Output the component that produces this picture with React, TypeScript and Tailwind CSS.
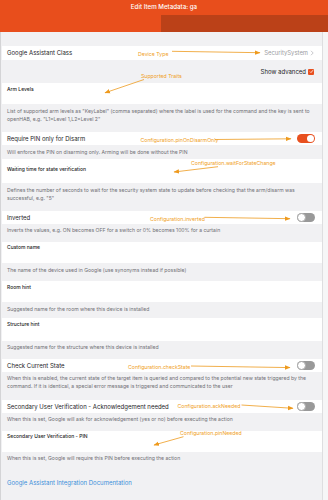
import React from "react";

function Toggle({ on }: { on: boolean }) {
  return on ? (
    <div className="w-[18px] h-[9px] rounded-full bg-[#e8501f] flex items-center justify-end pr-[1px]">
      <div className="w-[7px] h-[7px] rounded-full bg-white" />
    </div>
  ) : (
    <div className="w-[18px] h-[9px] rounded-full bg-[#999999] flex items-center justify-start">
      <div className="w-[9px] h-[9px] rounded-full bg-white border border-[#a8a8a8]" />
    </div>
  );
}

function ToggleRow({ label, on }: { label: string; on: boolean }) {
  return (
    <div className="h-[13px] bg-white flex items-center justify-between pl-[5px] pr-[7px]">
      <span className="text-[6px] leading-none text-[#1d1d1f]">{label}</span>
      <Toggle on={on} />
    </div>
  );
}

function Desc({ className, children }: { className: string; children: React.ReactNode }) {
  return (
    <div className={"pl-[5px] text-[5.1px] leading-[7.7px] text-[#707075] whitespace-nowrap " + className}>
      {children}
    </div>
  );
}

function Field({ className, label }: { className: string; label: string }) {
  return (
    <div className={"bg-white pl-[5px] " + className}>
      <div className="text-[5px] leading-[6px] font-medium text-[#222]">{label}</div>
    </div>
  );
}

function Note({ className, children }: { className: string; children: React.ReactNode }) {
  return (
    <span className={"absolute text-[5.2px] leading-none text-[#f0a025] whitespace-nowrap " + className}>
      {children}
    </span>
  );
}

export default function App() {
  return (
    <div className="relative w-[328px] h-[500px] overflow-hidden bg-[#f1f1f3] font-['Inter',sans-serif]">
      {/* header */}
      <div className="h-[32px] bg-[#e84e1c] flex flex-col">
        <div className="h-[15px] flex items-center justify-center text-white text-[6.2px] font-medium leading-none">
          Edit Item Metadata: ga
        </div>
        <div className="flex-1 flex">
          <div className="flex-1" />
          <div className="w-[167px] bg-[#bb4118]" />
        </div>
      </div>

      <div className="flex h-[468px]">
        <div className="w-px bg-[#d4d4d6]" />
        <div className="w-[321px] pl-px flex flex-col">
          <div className="h-[14px]" />
          <div className="h-[14px] bg-white flex items-center justify-between pl-[5px] pr-[8px]">
            <span className="text-[6px] leading-none text-[#1d1d1f]">Google Assistant Class</span>
            <span className="text-[5.9px] leading-none text-[#9c9ca1] flex items-center gap-[2px]">
              SecuritySystem
              <svg width="4" height="6" viewBox="0 0 4 6">
                <path d="M1 0.8 L3.2 3 L1 5.2" fill="none" stroke="#b0b0b5" strokeWidth="0.7" />
              </svg>
            </span>
          </div>
          <div className="h-[23px] flex items-center justify-end pr-[8px] gap-[2px]">
            <span className="text-[6px] leading-none text-[#1d1d1f]">Show advanced</span>
            <div className="w-[6px] h-[6px] bg-[#e8501f] rounded-[1px] flex items-center justify-center">
              <svg width="5" height="5" viewBox="0 0 5 5">
                <path d="M1 2.6 L2 3.6 L4 1.2" fill="none" stroke="white" strokeWidth="0.8" />
              </svg>
            </div>
          </div>
          <Field className="h-[21px] pt-[3px]" label="Arm Levels" />
          <Desc className="h-[28px] pt-[4px]">
            List of supported arm levels as "KeyLabel" (comma separated) where the label is used for the command and the key is sent to
            <br />
            openHAB, e.g. "L1=Level 1,L2=Level 2"
          </Desc>
          <ToggleRow label="Require PIN only for Disarm" on={true} />
          <Desc className="h-[14px] pt-[3.5px]">
            Will enforce the PIN on disarming only. Arming will be done without the PIN
          </Desc>
          <Field className="h-[24px] pt-[7px]" label="Waiting time for state verification" />
          <Desc className="h-[28px] pt-[4px]">
            Defines the number of seconds to wait for the security system state to update before checking that the arm/disarm was
            <br />
            successful, e.g. "5"
          </Desc>
          <ToggleRow label="Inverted" on={false} />
          <Desc className="h-[18px] pt-[3px]">
            Inverts the values, e.g. ON becomes OFF for a switch or 0% becomes 100% for a curtain
          </Desc>
          <Field className="h-[21px] pt-[2px]" label="Custom name" />
          <Desc className="h-[18px] pt-[3.5px]">
            The name of the device used in Google (use synonyms instead if possible)
          </Desc>
          <Field className="h-[21px] pt-[2.5px]" label="Room hint" />
          <Desc className="h-[16px] pt-[3.5px]">
            Suggested name for the room where this device is installed
          </Desc>
          <Field className="h-[23px] pt-[3px]" label="Structure hint" />
          <Desc className="h-[18px] pt-[3px]">
            Suggested name for the structure where this device is installed
          </Desc>
          <ToggleRow label="Check Current State" on={false} />
          <Desc className="h-[28px] pt-[3px]">
            When this is enabled, the current state of the target item is queried and compared to the potential new state triggered by the
            <br />
            command. If it is identical, a special error message is triggered and communicated to the user
          </Desc>
          <ToggleRow label="Secondary User Verification - Acknowledgement needed" on={false} />
          <Desc className="h-[18px] pt-[3px]">
            When this is set, Google will ask for acknowledgement (yes or no) before executing the action
          </Desc>
          <Field className="h-[21px] pt-[2px]" label="Secondary User Verification - PIN" />
          <Desc className="h-[28px] pt-[2.5px]">
            When this is set, Google will require this PIN before executing the action
          </Desc>
          <div className="pl-[5px] text-[6px] leading-none text-[#3a8fda]">
            Google Assistant Integration Documentation
          </div>
        </div>
        <div className="flex-1 border-l border-[#dedee0] bg-[#f6f6f7]" />
      </div>

      {/* annotations */}
      <svg className="absolute inset-0 pointer-events-none" width="328" height="500" viewBox="0 0 328 500">
        <defs>
          <marker id="ah" markerWidth="6" markerHeight="6" refX="5" refY="3" orient="auto" markerUnits="userSpaceOnUse">
            <path d="M0 0.8 L5.5 3 L0 5.2 Z" fill="#ee9a1e" />
          </marker>
        </defs>
        <g stroke="#ee9a1e" strokeWidth="0.8" fill="none" markerEnd="url(#ah)">
          <line x1="172" y1="51.3" x2="260" y2="52.7" />
          <line x1="144" y1="79.5" x2="105" y2="92.8" />
          <line x1="215" y1="139.5" x2="291" y2="138.8" />
          <line x1="218" y1="166.7" x2="174" y2="172" />
          <line x1="204.5" y1="217.3" x2="290" y2="218.7" />
          <line x1="191" y1="366" x2="290" y2="367.6" />
          <line x1="241.5" y1="405" x2="293" y2="408.3" />
          <line x1="183.5" y1="436.7" x2="154" y2="445" />
        </g>
      </svg>
      <Note className="left-[138px] top-[52px]">Device Type</Note>
      <Note className="left-[141px] top-[73.5px]">Supported Traits</Note>
      <Note className="left-[140.5px] top-[138px]">Configuration.pinOnDisarmOnly</Note>
      <Note className="left-[191px] top-[160.5px]">Configuration.waitForStateChange</Note>
      <Note className="left-[150px] top-[216.5px]">Configuration.inverted</Note>
      <Note className="left-[128px] top-[365px]">Configuration.checkState</Note>
      <Note className="left-[177.5px] top-[403.5px]">Configuration.ackNeeded</Note>
      <Note className="left-[180px] top-[430.5px]">Configuration.pinNeeded</Note>
    </div>
  );
}
